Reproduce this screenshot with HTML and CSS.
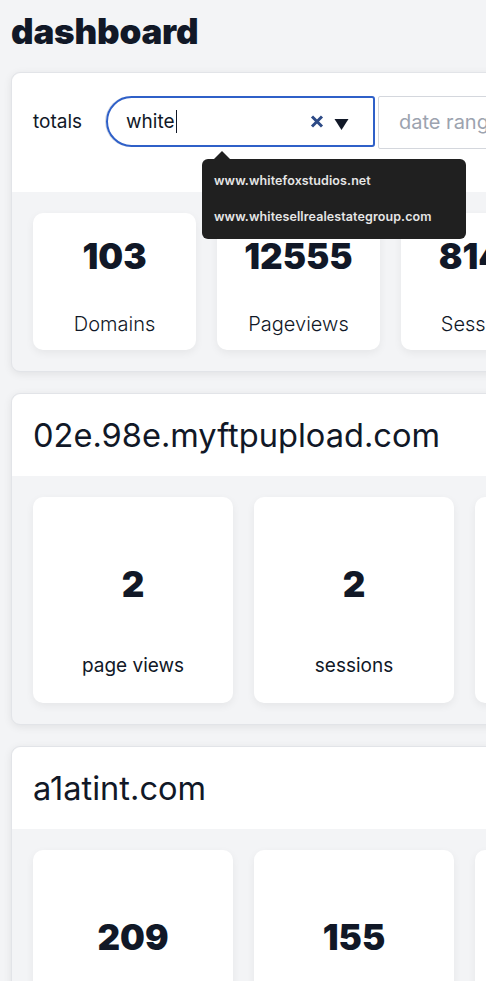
FILE: index.html
```html
<!DOCTYPE html>
<html lang="en">
<head>
<meta charset="utf-8">
<title>dashboard</title>
<link rel="stylesheet" href="styles.css">
</head>
<body>
<div class="page">
  <h1 class="title">dashboard</h1>

  <section class="panel">
    <div class="panel-head filters">
      <span class="filters-label">totals</span>
      <div class="combo">
        <span class="combo-value">white</span><span class="caret"></span>
        <span class="combo-clear">
          <svg width="14" height="13" viewBox="0 0 14 13"><path d="M2 1.5 L12 11.5 M12 1.5 L2 11.5" stroke="#2d4a86" stroke-width="3" stroke-linecap="butt" fill="none"/></svg>
        </span>
        <span class="combo-arrow">
          <svg width="15" height="12" viewBox="0 0 15 12"><path d="M0.5 1 L14.5 1 L7.5 12 Z" fill="#111827"/></svg>
        </span>
        <div class="dropdown">
          <div class="dropdown-item">www.whitefoxstudios.net</div>
          <div class="dropdown-item">www.whitesellrealestategroup.com</div>
        </div>
      </div>
      <div class="date-input">date range</div>
    </div>
    <div class="panel-body">
      <div class="stat stat-total">
        <div class="stat-num">103</div>
        <div class="stat-label light">Domains</div>
      </div>
      <div class="stat stat-total">
        <div class="stat-num">12555</div>
        <div class="stat-label light">Pageviews</div>
      </div>
      <div class="stat stat-total">
        <div class="stat-num">8143</div>
        <div class="stat-label light">Sessions</div>
      </div>
    </div>
  </section>

  <section class="panel">
    <div class="panel-head domain">02e.98e.myftpupload.com</div>
    <div class="panel-body">
      <div class="stat stat-domain">
        <div class="stat-num">2</div>
        <div class="stat-label">page views</div>
      </div>
      <div class="stat stat-domain">
        <div class="stat-num">2</div>
        <div class="stat-label">sessions</div>
      </div>
      <div class="stat stat-domain">
        <div class="stat-num">1</div>
        <div class="stat-label">visitors</div>
      </div>
    </div>
  </section>

  <section class="panel">
    <div class="panel-head domain">a1atint.com</div>
    <div class="panel-body">
      <div class="stat stat-domain">
        <div class="stat-num">209</div>
        <div class="stat-label">page views</div>
      </div>
      <div class="stat stat-domain">
        <div class="stat-num">155</div>
        <div class="stat-label">sessions</div>
      </div>
      <div class="stat stat-domain">
        <div class="stat-num">120</div>
        <div class="stat-label">visitors</div>
      </div>
    </div>
  </section>
</div>
</body>
</html>
```

FILE: styles.css
```css
html, body {
  margin: 0;
  padding: 0;
  overflow: hidden;
}
body {
  background: #f3f4f6;
  font-family: Inter, "Noto Sans", sans-serif;
  color: #111827;
}
.page {
  padding: 11px 11px 0 11px;
  width: 900px;
}
.title {
  margin: 0 0 20px 0;
  font-size: 35px;
  font-weight: 900;
  line-height: 41px;
  letter-spacing: -0.2px;
}
.panel {
  background: #f3f4f6;
  border: 1px solid #e2e4e8;
  border-radius: 9px;
  box-shadow: 0 2px 8px rgba(0,0,0,0.08);
  margin-bottom: 21px;
}
.panel-head {
  background: #fff;
  border-radius: 9px 9px 0 0;
}
.filters {
  display: flex;
  align-items: flex-start;
  padding: 23px 21px 43px 21px;
}
.filters-label {
  font-size: 19px;
  line-height: 51px;
  width: 73px;
  flex: none;
}
.combo {
  position: relative;
  box-sizing: border-box;
  width: 269px;
  height: 51px;
  border: 2px solid #2f60c8;
  border-radius: 26px 3px 3px 26px;
  box-shadow: -1px 0 0 0 #d9dce2;
  display: flex;
  align-items: center;
  padding-left: 18px;
  flex: none;
}
.combo-value {
  font-size: 19px;
}
.caret {
  display: inline-block;
  width: 1px;
  height: 23px;
  background: #111827;
  margin-left: 1px;
}
.combo-clear {
  margin-left: auto;
  display: flex;
  margin-right: 10px;
}
.combo-arrow {
  display: flex;
  margin-right: 24px;
  margin-top: 4px;
}
.dropdown {
  position: absolute;
  left: 94px;
  top: 61px;
  width: 264px;
  box-sizing: border-box;
  background: #202020;
  border-radius: 6px;
  padding: 4px 0 4px 12px;
  z-index: 5;
}
.dropdown::before {
  content: "";
  position: absolute;
  left: 12px;
  top: -8px;
  border-left: 8px solid transparent;
  border-right: 8px solid transparent;
  border-bottom: 8px solid #202020;
}
.dropdown-item {
  color: #e6e6e6;
  font-size: 12.5px;
  font-weight: 600;
  line-height: 36px;
  letter-spacing: 0.1px;
}
.date-input {
  box-sizing: border-box;
  margin-left: 3px;
  height: 53px;
  width: 250px;
  border: 1px solid #d4d7dd;
  border-radius: 2px;
  padding-left: 20px;
  font-size: 20px;
  line-height: 51px;
  color: #9ca3af;
  white-space: nowrap;
  flex: none;
}
.panel-body {
  display: flex;
  gap: 21px;
  padding: 21px;
  border-radius: 0 0 9px 9px;
}
.stat {
  background: #fff;
  border-radius: 10px;
  box-shadow: 0 3px 8px rgba(0,0,0,0.06);
  display: flex;
  flex-direction: column;
  align-items: center;
  flex: none;
}
.stat-num {
  font-size: 35px;
  font-weight: 900;
  line-height: 44px;
}
.stat-label {
  font-size: 19px;
  line-height: 28px;
}
.stat-label.light {
  font-weight: 300;
  font-size: 20px;
}
.stat-total {
  width: 163px;
  height: 137px;
  box-sizing: border-box;
  padding-top: 21px;
}
.stat-total .stat-label {
  margin-top: 32px;
}
.stat-domain {
  width: 200px;
  height: 206px;
  box-sizing: border-box;
  padding-top: 65px;
}
.stat-domain .stat-label {
  margin-top: 46px;
}
.domain {
  font-size: 32.6px;
  line-height: 82px;
  padding-left: 21px;
  height: 82px;
}
```
